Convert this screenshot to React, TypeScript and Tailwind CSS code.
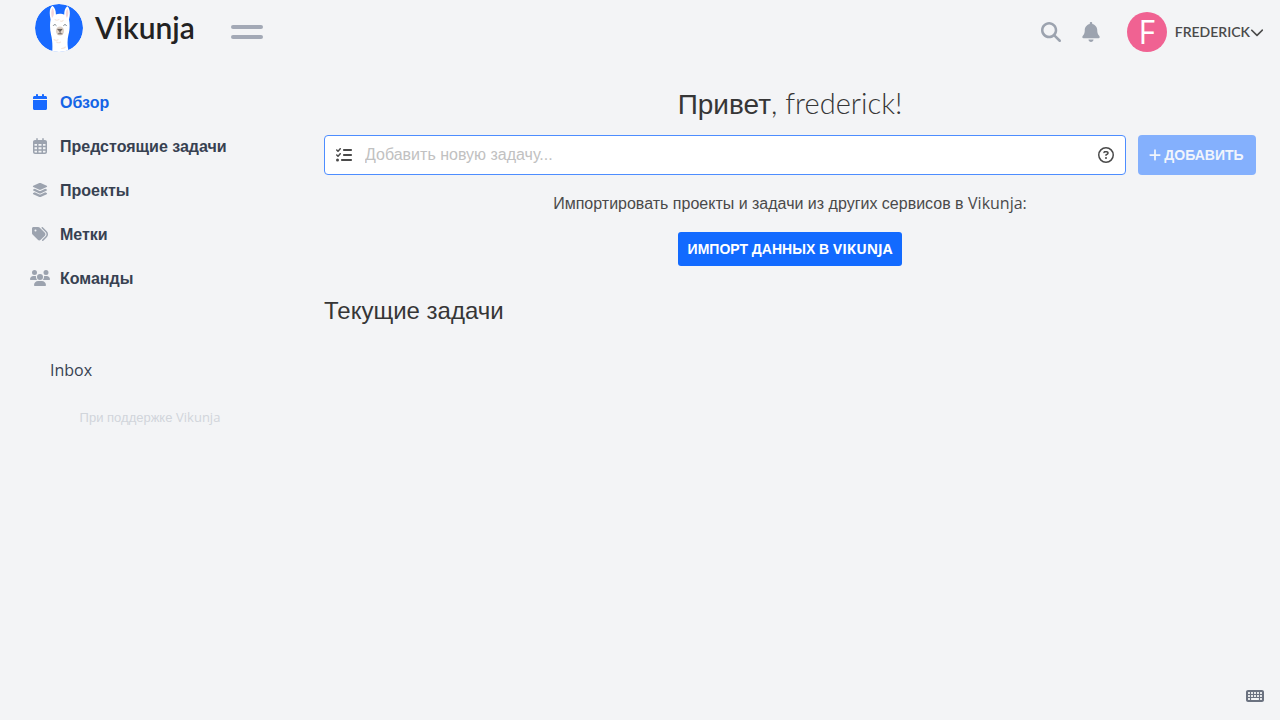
import type { ReactNode } from 'react';
import {
  FaBell,
  FaCalendar,
  FaChevronDown,
  FaKeyboard,
  FaLayerGroup,
  FaListCheck,
  FaMagnifyingGlass,
  FaPlus,
  FaRegCalendarDays,
  FaRegCircleQuestion,
  FaTags,
  FaUsers,
} from 'react-icons/fa6';

function LlamaLogo() {
  return (
    <svg viewBox="0 0 48 48" className="size-12 shrink-0" aria-hidden="true">
      <defs>
        <clipPath id="disc">
          <circle cx="24" cy="24" r="24" />
        </clipPath>
      </defs>
      <g clipPath="url(#disc)">
        <circle cx="24" cy="24" r="24" fill="#196aff" />
        <path d="M17 50C17.8 42 17.4 36 16 30.5C14.9 25.5 14.7 20 15.6 15.5C14 9 14.6 3.8 17.4 1.8C19.9 3.5 21 7 20.9 10.6C23 9.6 27 9.6 29.2 10.8C29.2 7 30 3.8 32.4 2.2C35.2 4.5 35.4 10 34 15.5C35 20 34.8 26 33.4 31C32.2 36 32 43 34.6 50Z" fill="#fff" />
        <path d="M17.6 4C15.9 6.4 15.9 10.5 17 14C19.3 12 19.6 7 17.6 4Z" fill="#f3d5da" />
        <path d="M32.4 4.4C30.4 7 30.2 11 31.9 14C33.6 11 34 7 32.4 4.4Z" fill="#f3d5da" />
        <ellipse cx="25" cy="27" rx="4.1" ry="4.6" fill="#e0d3c8" />
        <path d="M23 25.4H27.2L25.1 27ZM25.1 27V29.4M23.2 29.8H27" fill="#5a524e" stroke="#5a524e" strokeWidth=".8" strokeLinecap="round" />
        <path d="M18.4 21.4C19 20.3 20.4 20.3 21.2 21.4M28.6 21.4C29.4 20.3 30.8 20.3 31.4 21.4" fill="none" stroke="#657078" strokeWidth=".9" strokeLinecap="round" />
        <path d="M20 15.5Q22 17 24 15.3M25.5 17Q27 18 28.2 16.3M19 35.5Q21 37 23 35.7M21.6 38Q23.6 39.5 25.6 38M26.6 44.5Q29 44.5 30.4 43" fill="none" stroke="#f5e6db" strokeWidth="1.1" strokeLinecap="round" />
      </g>
    </svg>
  );
}

function Latin({ children }: { children: ReactNode }) {
  return <span className='font-["Open_Sans",sans-serif]'>{children}</span>;
}

const links = [
  { label: 'Обзор', icon: FaCalendar, size: 'size-4', active: true },
  { label: 'Предстоящие задачи', icon: FaRegCalendarDays, size: 'size-4' },
  { label: 'Проекты', icon: FaLayerGroup, size: 'size-4' },
  { label: 'Метки', icon: FaTags, size: 'size-4' },
  { label: 'Команды', icon: FaUsers, size: 'size-5' },
];

function Header() {
  return (
    <header className="flex h-16 items-center justify-between pr-4 pl-[35px]">
      <div className="flex items-center">
        <a href="#home" className="flex items-center gap-3 pb-2 text-[#222]">
          <LlamaLogo />
          <span className='pb-0.5 font-["Lato",sans-serif] text-[30px] leading-8 font-semibold'>Vikunja</span>
        </a>
        <button type="button" aria-label="Меню" className="ml-9 flex w-8 flex-col gap-1.5">
          <span className="h-1 w-full rounded-full bg-[#a3a9b6]" />
          <span className="h-1 w-full rounded-full bg-[#a3a9b6]" />
        </button>
      </div>
      <div className="flex items-center text-[#9ca3af]">
        <button type="button" aria-label="Поиск" className="flex size-10 items-center justify-center">
          <FaMagnifyingGlass className="size-5" />
        </button>
        <button type="button" aria-label="Уведомления" className="flex size-10 items-center justify-center">
          <FaBell className="size-5" />
        </button>
        <button type="button" className="ml-4 flex items-center text-[#4a4a4a]">
          <span className='mr-2 flex size-10 items-center justify-center rounded-full bg-[#f06292] font-["Open_Sans",sans-serif] text-[32px] leading-10 font-normal text-white'>
            F
          </span>
          <span className='font-["Lato",sans-serif] text-sm font-semibold'>FREDERICK</span>
          <FaChevronDown className="size-3.5" />
        </button>
      </div>
    </header>
  );
}

function Sidebar() {
  return (
    <aside className="w-[300px] shrink-0 pt-[17px]">
      <nav>
        <ul>
          {links.map(({ label, icon: Icon, size, active }) => (
            <li key={label}>
              <a
                href="#nav"
                className={`flex h-11 items-center pl-[30px] font-bold ${active ? 'text-[#1464e6]' : 'text-[#374151]'}`}
              >
                <span className={`mr-2.5 flex w-5 justify-center pb-0.5 ${active ? 'text-[#196aff]' : 'text-[#9ca3af]'}`}>
                  <Icon className={size} />
                </span>
                {label}
              </a>
            </li>
          ))}
        </ul>
        <a href="#inbox" className="mt-[47px] flex h-11 items-center pl-[50px] text-[#374151]">
          <Latin>Inbox</Latin>
        </a>
      </nav>
      <a href="#powered" className="mt-[15px] block text-center text-[13px] leading-5 text-[#d1d5db]">
        При поддержке <Latin>Vikunja</Latin>
      </a>
    </aside>
  );
}

export default function App() {
  return (
    <div className='flex min-h-screen flex-col bg-[#f3f4f6] font-["Liberation_Sans",Arial,sans-serif] text-base text-[#4a4a4a]'>
      <Header />
      <div className="flex grow">
        <Sidebar />
        <main className="grow px-6 pt-[23px] text-center">
          <h2 className="text-[28px] leading-8 text-[#363636]">
            Привет<span className='font-["Lato",sans-serif] text-[29px] font-light'>, frederick!</span>
          </h2>
          <form className="mt-3.5 flex gap-3">
            <label className="flex h-10 grow items-center rounded border border-[#4d8dff] bg-white px-[11px]">
              <FaListCheck className="size-4 shrink-0" />
              <input
                type="text"
                aria-label="Добавить новую задачу"
                placeholder="Добавить новую задачу..."
                className="ml-[13px] grow outline-none placeholder:text-[#c1c1c1]"
              />
              <FaRegCircleQuestion className="size-4 shrink-0" />
            </label>
            <button type="button" className="flex h-10 w-[118px] items-center justify-center gap-0.5 rounded bg-[#84b0fd] pr-0.5 text-sm font-bold text-[#f1f5fc]">
              <FaPlus className="size-3.5" />
              ДОБАВИТЬ
            </button>
          </form>
          <p className="mt-4 leading-6">
            Импортировать проекты и задачи из других сервисов в <Latin>Vikunja:</Latin>
          </p>
          <button type="button" className="mt-4 h-[34px] rounded-[3px] bg-[#126aff] px-2.5 text-sm font-bold text-white">
            ИМПОРТ ДАННЫХ В <Latin>VIKUNJA</Latin>
          </button>
          <h3 className="mt-[29px] text-left text-2xl leading-8 text-[#363636]">Текущие задачи</h3>
        </main>
      </div>
      <footer className="flex justify-end px-4 pb-[15px]">
        <button type="button" aria-label="Горячие клавиши" className="text-[#6b7280]">
          <FaKeyboard className="size-[18px]" />
        </button>
      </footer>
    </div>
  );
}
